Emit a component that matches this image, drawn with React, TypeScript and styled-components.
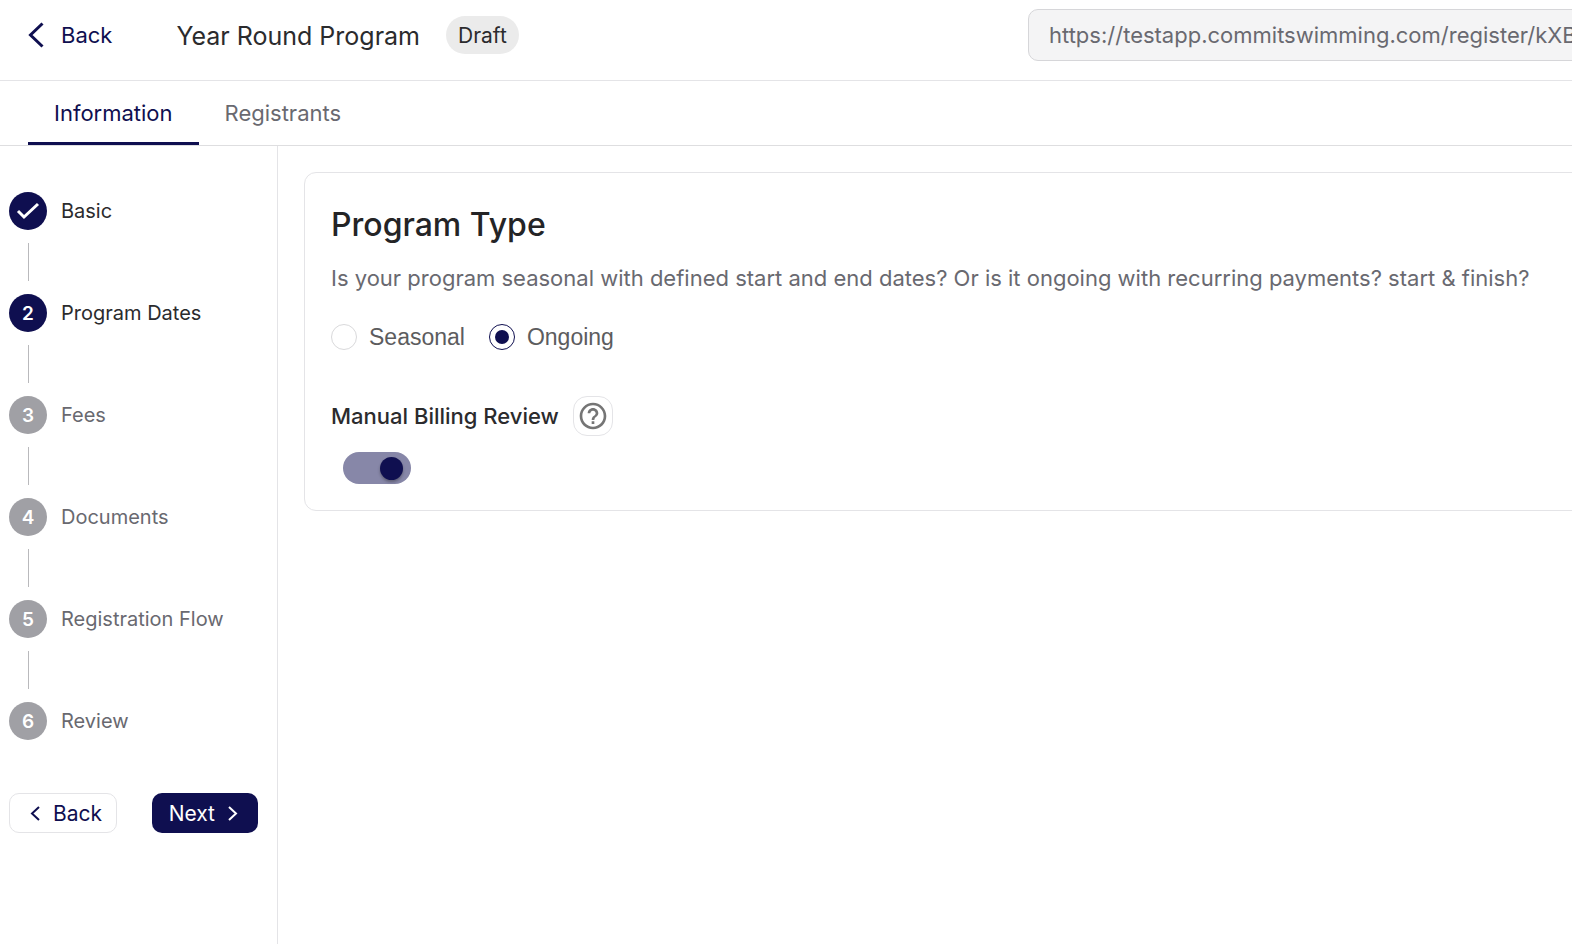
import { useState } from "react";
import styled, { createGlobalStyle, css } from "styled-components";

const navy = "#0f0f50";
const ink = "#2b2b2d";
const muted = "#696970";
const line = "#e4e4e7";

const GlobalStyle = createGlobalStyle`
  *, *::before, *::after { box-sizing: border-box; }
  body {
    margin: 0;
    background: #fff;
    color: ${ink};
    font-family: Inter, "Liberation Sans", sans-serif;
    font-size: 22px;
    overflow: hidden;
  }
  button, input { font: inherit; }
`;

const Page = styled.div`
  display: flex;
  flex-direction: column;
  min-width: 1640px;
  min-height: 100vh;
`;

const Header = styled.header`
  display: flex;
  align-items: flex-start;
  padding: 9px 28px 19px;
  border-bottom: 1px solid ${line};
`;

const HeaderGroup = styled.div`
  display: flex;
  align-items: center;
  height: 52px;
`;

const BackLink = styled.a`
  display: flex;
  align-items: center;
  gap: 16px;
  color: ${navy};
  text-decoration: none;
`;

const Title = styled.h1`
  margin: 0 26px 0 64px;
  padding-top: 2px;
  font-size: 25px;
  font-weight: 400;
`;

const Badge = styled.span`
  padding: 2px 12px 0;
  border-radius: 19px;
  background: #ebebeb;
  font-size: 21px;
  line-height: 36px;
`;

const UrlField = styled.input`
  width: 584px;
  height: 52px;
  margin-left: auto;
  padding: 0 20px;
  border: 1px solid #d6d6d9;
  border-radius: 10px;
  background: #f4f4f5;
  color: ${muted};
  outline: none;
`;

const Tabs = styled.nav`
  display: flex;
  padding: 0 28px;
  border-bottom: 1px solid #dedee0;
`;

const Tab = styled.button<{ $active?: boolean }>`
  height: 64px;
  padding: 2px 26px 0;
  border: 0;
  border-bottom: 3px solid ${(p) => (p.$active ? navy : "transparent")};
  background: none;
  color: ${(p) => (p.$active ? navy : muted)};
`;

const Body = styled.div`
  display: flex;
  flex: 1;
`;

const Sidebar = styled.aside`
  width: 278px;
  padding: 46px 19px 0 9px;
  border-right: 1px solid ${line};
`;

const Steps = styled.ol`
  margin: 0;
  padding: 0;
  list-style: none;
`;

const Step = styled.li<{ $reached: boolean }>`
  display: grid;
  grid-template-columns: 38px 1fr;
  align-items: center;
  column-gap: 14px;
  color: ${(p) => (p.$reached ? ink : muted)};
  font-size: 20px;

  &:not(:last-child)::after {
    content: "";
    width: 1px;
    height: 38px;
    margin: 13px 0;
    justify-self: center;
    background: #b9b9bc;
  }
`;

const StepMark = styled.span<{ $reached: boolean }>`
  display: grid;
  place-items: center;
  height: 38px;
  border-radius: 50%;
  background: ${(p) => (p.$reached ? navy : "#a0a0a5")};
  color: #fff;
  font-size: 19px;
  font-weight: 600;
`;

const StepActions = styled.div`
  display: flex;
  align-items: center;
  justify-content: space-between;
  margin-top: 53px;
`;

const StepButton = styled.button<{ $primary?: boolean }>`
  display: flex;
  align-items: center;
  height: 40px;
  border-radius: 10px;
  font-size: 21px;
  ${(p) =>
    p.$primary
      ? css`
          gap: 12px;
          padding: 0 20px 0 17px;
          border: 0;
          background: ${navy};
          color: #fff;
        `
      : css`
          gap: 12px;
          padding: 0 14px 0 20px;
          border: 1px solid ${line};
          background: #fff;
          color: ${navy};
        `}
`;

const Main = styled.main`
  flex: 1;
  padding: 26px;
`;

const Card = styled.section`
  padding: 32px 26px 26px;
  border: 1px solid ${line};
  border-radius: 12px;
`;

const CardTitle = styled.h2`
  margin: 0;
  color: #242426;
  font-size: 32px;
  font-weight: 500;
  line-height: 40px;
`;

const Lead = styled.p`
  margin: 17px 0 0;
  color: ${muted};
  line-height: 32px;
  white-space: nowrap;
`;

const RadioGroup = styled.fieldset`
  display: flex;
  gap: 24px;
  margin: 29px 0 0;
  padding: 0;
  border: 0;
`;

const RadioLabel = styled.label`
  display: flex;
  align-items: center;
  gap: 12px;
  color: #5c5c5e;
  font-family: "Liberation Sans", Arial, sans-serif;
  font-size: 23px;
  line-height: 28px;
`;

const Radio = styled.input`
  appearance: none;
  display: grid;
  place-items: center;
  width: 26px;
  height: 26px;
  margin: 0;
  border: 1px solid #d9d9db;
  border-radius: 50%;
  background: #fff;

  &:checked { border-color: ${navy}; }
  &:checked::before {
    content: "";
    width: 14px;
    height: 14px;
    border-radius: 50%;
    background: ${navy};
  }
`;

const SettingRow = styled.div`
  display: flex;
  align-items: center;
  gap: 14px;
  margin-top: 45px;
`;

const SettingLabel = styled.label`
  font-weight: 500;
`;

const HelpButton = styled.button`
  display: grid;
  place-items: center;
  width: 40px;
  height: 40px;
  padding: 0;
  border: 1px solid ${line};
  border-radius: 14px;
  background: #fff;
  color: #757575;
`;

const Switch = styled.input`
  appearance: none;
  display: flex;
  align-items: center;
  width: 68px;
  height: 32px;
  margin: 16px 0 0 12px;
  padding: 0 8px;
  border-radius: 16px;
  background: #b5b5b9;

  &::before {
    content: "";
    width: 23px;
    height: 23px;
    border-radius: 50%;
    background: #fff;
    box-shadow: 0 2px 3px rgba(0, 0, 0, 0.3);
  }
  &:checked { justify-content: flex-end; background: #8787a8; }
  &:checked::before { background: ${navy}; }
`;

type ChevronProps = { width: number; height: number; stroke: number; right?: boolean };

function Chevron({ width, height, stroke, right }: ChevronProps) {
  const near = stroke / 2 + 1;
  const tip = right ? width - near : near;
  const end = right ? near : width - near;
  return (
    <svg width={width} height={height} fill="none" stroke="currentColor" strokeWidth={stroke} aria-hidden="true">
      <path d={`M${end} ${near}L${tip} ${height / 2}L${end} ${height - near}`} />
    </svg>
  );
}

function HelpIcon() {
  return (
    <svg width="32" height="32" viewBox="0 0 24 24" fill="currentColor" aria-hidden="true">
      <path d="M11 18h2v-2h-2v2zm1-16C6.48 2 2 6.48 2 12s4.48 10 10 10 10-4.48 10-10S17.52 2 12 2zm0 18c-4.41 0-8-3.59-8-8s3.59-8 8-8 8 3.59 8 8-3.59 8-8 8zm0-14c-2.21 0-4 1.79-4 4h2c0-1.1.9-2 2-2s2 .9 2 2c0 2-3 1.75-3 5h2c0-2.25 3-2.5 3-5 0-2.21-1.79-4-4-4z" />
    </svg>
  );
}

const steps = ["Basic", "Program Dates", "Fees", "Documents", "Registration Flow", "Review"];
const current = 1;

export default function App() {
  const [type, setType] = useState("Ongoing");
  const [manual, setManual] = useState(true);

  return (
    <>
      <GlobalStyle />
      <Page>
        <Header>
          <HeaderGroup>
            <BackLink href="#programs">
              <Chevron width={17} height={28} stroke={3} />
              Back
            </BackLink>
            <Title>Year Round Program</Title>
            <Badge>Draft</Badge>
          </HeaderGroup>
          <UrlField
            aria-label="Registration link"
            readOnly
            value="https://testapp.commitswimming.com/register/kXB"
          />
        </Header>
        <Tabs>
          <Tab $active>Information</Tab>
          <Tab>Registrants</Tab>
        </Tabs>
        <Body>
          <Sidebar>
            <Steps>
              {steps.map((name, i) => (
                <Step key={name} $reached={i <= current}>
                  <StepMark $reached={i <= current}>
                    {i < current ? (
                      <svg width="24" height="18" fill="none" stroke="#fff" strokeWidth="3" aria-label="Done">
                        <path d="M2 9L8 15L22 2" />
                      </svg>
                    ) : (
                      i + 1
                    )}
                  </StepMark>
                  <span>{name}</span>
                </Step>
              ))}
            </Steps>
            <StepActions>
              <StepButton>
                <Chevron width={11} height={17} stroke={2} />
                Back
              </StepButton>
              <StepButton $primary>
                Next
                <Chevron width={11} height={17} stroke={2} right />
              </StepButton>
            </StepActions>
          </Sidebar>
          <Main>
            <Card>
              <CardTitle>Program Type</CardTitle>
              <Lead>
                Is your program seasonal with defined start and end dates? Or is it ongoing with recurring payments?
                start &amp; finish?
              </Lead>
              <RadioGroup aria-label="Program type">
                {["Seasonal", "Ongoing"].map((name) => (
                  <RadioLabel key={name}>
                    <Radio type="radio" name="type" checked={type === name} onChange={() => setType(name)} />
                    {name}
                  </RadioLabel>
                ))}
              </RadioGroup>
              <SettingRow>
                <SettingLabel htmlFor="manual">Manual Billing Review</SettingLabel>
                <HelpButton aria-label="About manual billing review">
                  <HelpIcon />
                </HelpButton>
              </SettingRow>
              <Switch id="manual" type="checkbox" checked={manual} onChange={() => setManual(!manual)} />
            </Card>
          </Main>
        </Body>
      </Page>
    </>
  );
}
